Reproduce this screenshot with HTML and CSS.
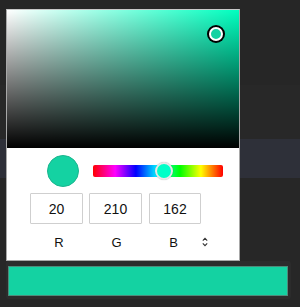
FILE: index.html
```html
<!DOCTYPE html>
<html lang="en">
<head>
    <meta charset="UTF-8">
    <title>Color Picker</title>
    <link rel="stylesheet" href="styles.css">
</head>
<body>
    <div class="band band-top"></div>
    <div class="band band-mid"></div>
    <div class="band band-sel"></div>
    <div class="band band-low">
        <div class="field">
            <div class="field-value"></div>
        </div>
    </div>

    <div class="picker">
        <div class="sat-area">
            <div class="sat-white"></div>
            <div class="sat-black"></div>
            <div class="sat-cursor"></div>
        </div>
        <div class="controls">
            <div class="top-row">
                <div class="swatch"></div>
                <div class="hue">
                    <div class="hue-thumb"></div>
                </div>
            </div>
            <div class="inputs">
                <div class="num">20</div>
                <div class="num">210</div>
                <div class="num">162</div>
            </div>
            <div class="labels">
                <span>R</span>
                <span>G</span>
                <span>B</span>
                <svg class="toggle" width="6" height="10" viewBox="0 0 6 10">
                    <path d="M0.8 3.6 L3 1.4 L5.2 3.6" fill="none" stroke="#333" stroke-width="1.1"/>
                    <path d="M0.8 6.4 L3 8.6 L5.2 6.4" fill="none" stroke="#333" stroke-width="1.1"/>
                </svg>
            </div>
        </div>
    </div>
</body>
</html>
```

FILE: styles.css
```css
body {
    margin: 0;
    background: #242424;
    font-family: Arial, "Liberation Sans", sans-serif;
    overflow: hidden;
    position: relative;
    height: 307px;
}

.band-top { height: 85px; background: #262626; }
.band-mid { height: 54px; background: #282828; }
.band-sel { height: 39px; background: #2e3039; }

.band-low {
    height: 129px;
    background: #272727;
    padding: 83px 9px 0 6px;
    box-sizing: border-box;
}

.field {
    height: 38px;
    background: #2c2c2c;
    border-radius: 3px;
    padding: 5px 3px 3px 2px;
    box-sizing: border-box;
}

.field-value {
    height: 30px;
    background: #14d2a2;
    border: 1px solid #4f8a7a;
    box-sizing: border-box;
}

/* popup */
.picker {
    position: absolute;
    left: 6px;
    top: 9px;
    width: 234px;
    height: 252px;
    background: #fff;
    border: 1px solid #a8a8a8;
    border-top-color: #c8c8c8;
    box-sizing: border-box;
}

.sat-area {
    position: relative;
    height: 138px;
    background: #00ffbf;
}

.sat-white {
    position: absolute;
    inset: 0;
    background: linear-gradient(to right, #fff, rgba(255,255,255,0));
}

.sat-black {
    position: absolute;
    inset: 0;
    background: linear-gradient(to bottom, rgba(0,0,0,0), #000);
}

.sat-cursor {
    position: absolute;
    left: 202px;
    top: 17px;
    width: 10px;
    height: 10px;
    border-radius: 50%;
    background: #14d2a2;
    border: 2px solid #fff;
    box-shadow: 0 0 0 2px #000;
}

.controls {
    padding: 7px 0 0 23px;
}

.top-row {
    display: flex;
    align-items: center;
    gap: 14px;
    margin-left: 17px;
}

.swatch {
    width: 32px;
    height: 32px;
    border-radius: 50%;
    background: #14d2a2;
    box-sizing: border-box;
    border: 1px solid #1bb58e;
}

.hue {
    position: relative;
    width: 130px;
    height: 12px;
    border-radius: 2px;
    background: linear-gradient(to right, #f00 0%, #f0f 17%, #00f 33%, #0ff 50%, #0f0 67%, #ff0 83%, #f00 100%);
}

.hue-thumb {
    position: absolute;
    left: 62px;
    top: -3px;
    width: 14px;
    height: 14px;
    border-radius: 50%;
    background: #00ffc8;
    border: 2px solid #e8e8e8;
    box-shadow: 0 0 1px rgba(0,0,0,0.3);
}

.inputs {
    display: flex;
    gap: 6px;
    margin-top: 6px;
}

.num {
    width: 53px;
    height: 31px;
    border: 1px solid #cfcfcf;
    border-radius: 1px;
    box-sizing: border-box;
    display: flex;
    align-items: center;
    justify-content: center;
    font-size: 14px;
    color: #111;
}

.num:nth-child(3) { width: 52px; margin-left: 1px; }

.labels {
    display: flex;
    align-items: center;
    height: 14px;
    margin-top: 11px;
    font-size: 13px;
    color: #111;
}

.labels span {
    width: 57px;
    text-align: center;
}

.labels span:first-child { width: 58px; }
```
